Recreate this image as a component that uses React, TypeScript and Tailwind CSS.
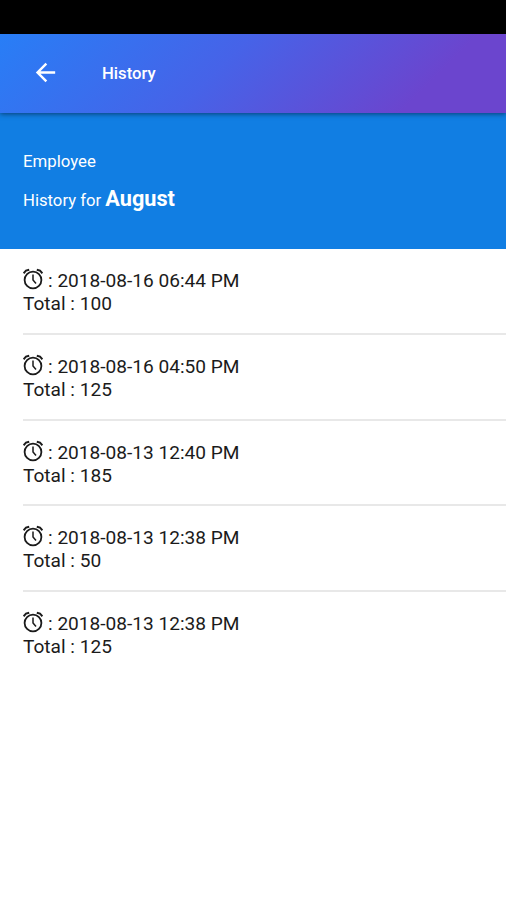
import { MdArrowBack } from 'react-icons/md'

const records = [
  { time: '2018-08-16 06:44 PM', total: 100 },
  { time: '2018-08-16 04:50 PM', total: 125 },
  { time: '2018-08-13 12:40 PM', total: 185 },
  { time: '2018-08-13 12:38 PM', total: 50 },
  { time: '2018-08-13 12:38 PM', total: 125 },
]

export default function App() {
  return (
    <div className="min-h-[900px] bg-white font-[Roboto,sans-serif] text-[#1b1b1b]">
      {/* Status bar */}
      <div className="h-[34px] bg-black" />

      <header className="relative flex h-[79px] items-center bg-linear-[135deg,#287ef6_0%,#4663e8_43%,#6b45ce_82%] pl-[31px] text-white shadow-[0_1px_5px_rgba(0,0,0,0.5)]">
        <button aria-label="Back" className="-mt-[2px]">
          <MdArrowBack size={29} />
        </button>
        <h1 className="mt-px ml-[42px] text-[16.7px] font-medium">History</h1>
      </header>

      <section className="h-[136px] bg-[#117ee3] pt-[36px] pl-[23px] text-white">
        <p className="text-[16.8px] leading-[24px]">Employee</p>
        <p className="mt-[13px] text-[16.7px] leading-[26px]">
          History for <b className="text-[21.7px]">August</b>
        </p>
      </section>

      <ul className="pl-[23px]">
        {records.map((record, i) => (
          <RecordRow key={i} time={record.time} total={record.total} last={i === records.length - 1} />
        ))}
      </ul>
    </div>
  )
}

function RecordRow({ time, total, last }: { time: string; total: number; last: boolean }) {
  return (
    <li className={`h-[85.8px] pt-[20px] text-[19.1px] leading-[23px] ${last ? '' : 'border-b-2 border-[#e8e8e8]'}`}>
      <p className="flex items-center">
        <AlarmIcon />
        <span className="ml-[5px]">: {time}</span>
      </p>
      <p>Total : {total}</p>
    </li>
  )
}

function AlarmIcon() {
  return (
    <svg className="-mt-[3px]" width="20" height="22" viewBox="0 0 20 22" fill="none" stroke="currentColor">
      <circle cx="10" cy="12" r="8.4" strokeWidth="1.8" />
      <path d="M10 6.500v5.500l3 3.600" strokeWidth="1.500" />
      {/* bells */}
      <path d="M0.600 5.200 3 2.600 6.200 1.800M19.400 5.200 17 2.600 13.800 1.800" strokeWidth="2" />
    </svg>
  )
}
